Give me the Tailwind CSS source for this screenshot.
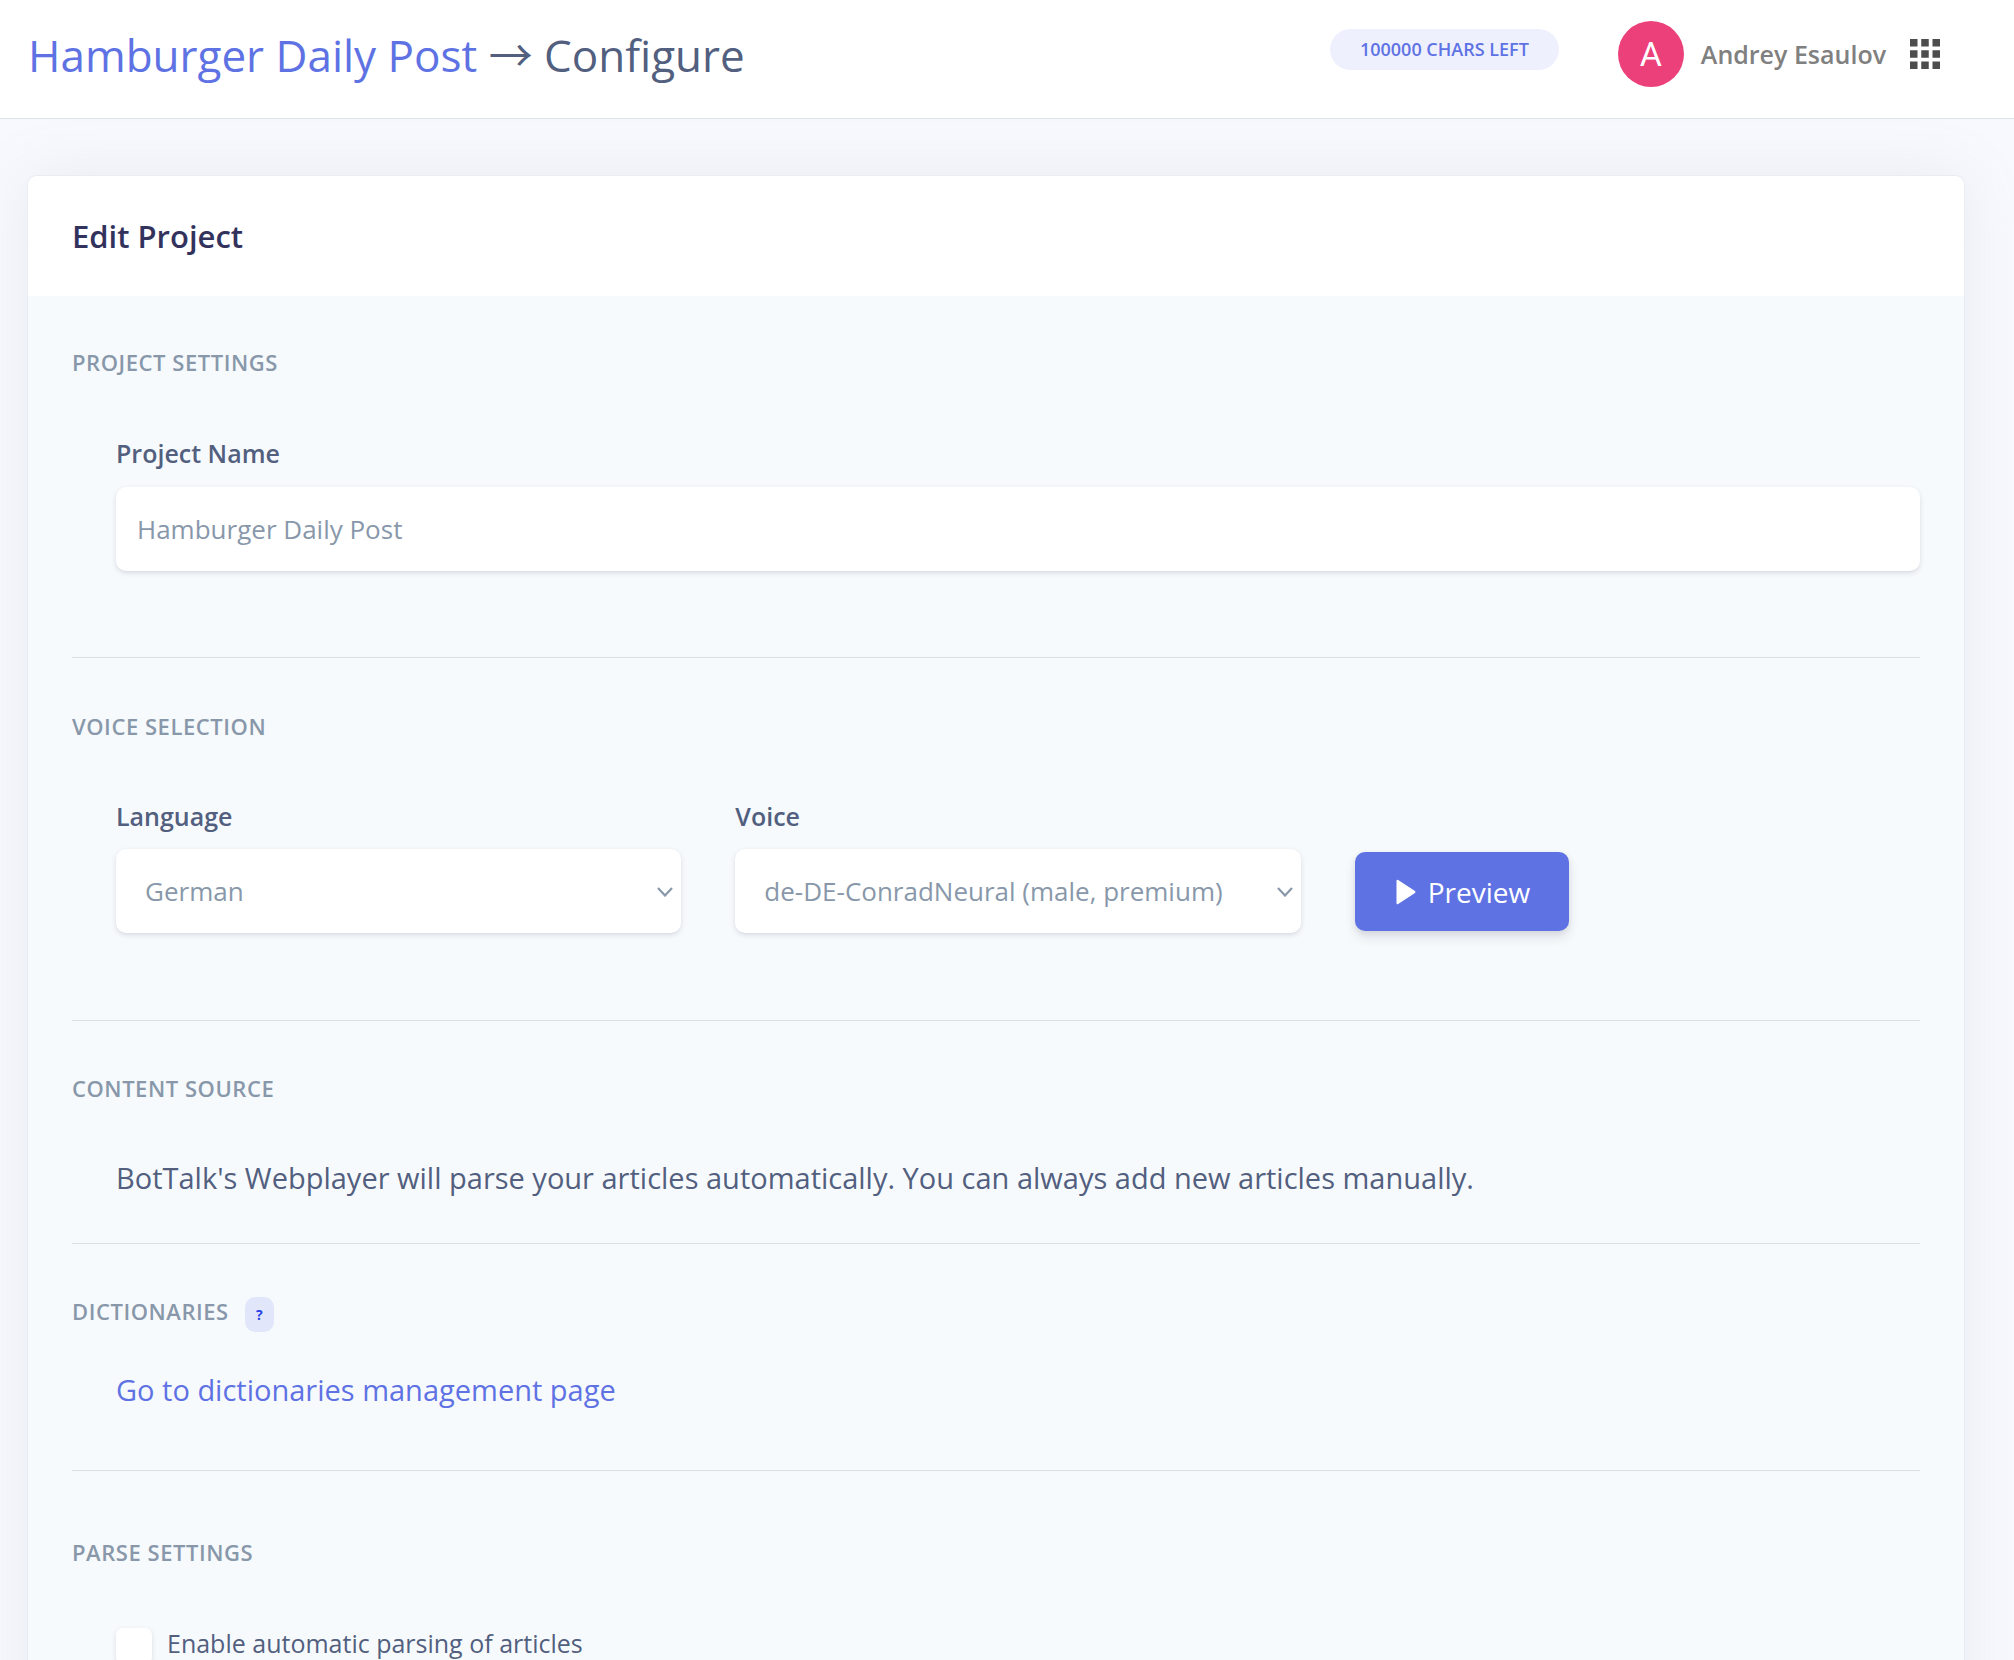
<!DOCTYPE html>
<html lang="en">
  <head>
    <meta charset="UTF-8" />
    <meta name="viewport" content="width=device-width, initial-scale=1.0" />
    <title>Hamburger Daily Post - Configure</title>
    <script src="https://cdn.jsdelivr.net/npm/@tailwindcss/browser@4"></script>
  </head>

  <body class="bg-[#f8f9fe] font-['Open_Sans',sans-serif] text-[#525f7f]">
    <div class="h-screen overflow-hidden">
      <!-- Top bar -->
      <header
        class="flex items-center bg-white border-b border-[#dfe2e6] pl-7 pr-[74px] pt-[21px] pb-[31px]"
      >
        <h1 class="text-[44px] leading-[56px] whitespace-nowrap">
          <a href="#" class="text-[#5e72e4]">Hamburger Daily Post</a>
          <span class="font-['Noto_Sans_CJK_SC',sans-serif]">→</span>
          Configure
        </h1>

        <span
          class="ml-auto mb-[10px] rounded-full bg-[#eef1fd] px-[30px] py-2 text-[18px] leading-[25px] font-semibold text-[#5e72e4] whitespace-nowrap"
          >100000 CHARS LEFT</span
        >

        <a href="#" class="ml-[59px] flex items-center gap-[17px]">
          <span
            class="flex size-[66px] items-center justify-center rounded-full bg-[#ec407a] font-[Roboto] text-[34px] text-white"
            >A</span
          >
          <span
            class="text-[25px] leading-10 font-semibold text-[#808080] whitespace-nowrap"
            >Andrey Esaulov</span
          >
        </a>

        <button type="button" aria-label="Apps" class="ml-6">
          <svg class="size-[30px]" viewBox="0 0 30 30" fill="#4d4d4d">
            <path
              d="M0 0h7.5v7.5H0zM11.25 0h7.5v7.5h-7.5zM22.5 0H30v7.5h-7.5zM0 11.25h7.5v7.5H0zM11.25 11.25h7.5v7.5h-7.5zM22.5 11.25H30v7.5h-7.5zM0 22.5h7.5V30H0zM11.25 22.5h7.5V30h-7.5zM22.5 22.5H30V30h-7.5z"
            />
          </svg>
        </button>
      </header>

      <!-- Project card -->
      <main
        class="mt-14 ml-[27px] mr-[49px] rounded-[10px] border border-black/5 bg-[#f7fafc] shadow-[0_0_60px_0_rgba(136,152,170,0.15)]"
      >
        <div class="rounded-t-[9px] bg-white px-11 py-9">
          <h2 class="text-[31px] leading-[48px] font-semibold text-[#32325d]">
            Edit Project
          </h2>
        </div>

        <form class="px-11 pt-[50px] pb-24">
          <!-- Project settings -->
          <section>
            <h3
              class="text-[22px] leading-8 font-semibold tracking-wide text-[#8898aa]"
            >
              PROJECT SETTINGS
            </h3>
            <div class="mt-[55px] pl-11">
              <label
                for="projectName"
                class="block text-[25px] leading-10 font-semibold"
                >Project Name</label
              >
              <input
                type="text"
                id="projectName"
                value="Hamburger Daily Post"
                class="mt-[14px] block h-[84px] w-full rounded-[10px] bg-white px-[21px] text-[26px] text-[#8898aa] shadow-[0_2px_5px_rgba(50,50,93,0.15),0_1px_0_rgba(0,0,0,0.02)] focus:outline-none"
              />
            </div>
          </section>

          <hr class="mt-[86px] mb-[52px] border-black/10" />

          <!-- Voice selection -->
          <section>
            <h3
              class="text-[22px] leading-8 font-semibold tracking-wide text-[#8898aa]"
            >
              VOICE SELECTION
            </h3>
            <div class="mt-[54px] grid grid-cols-3 items-end gap-[54px] pl-11">
              <div>
                <label
                  for="language"
                  class="block text-[25px] leading-10 font-semibold"
                  >Language</label
                >
                <div class="relative mt-[13px]">
                  <select
                    id="language"
                    class="block h-[84px] w-full appearance-none rounded-[10px] bg-white pl-[29px] pr-10 text-[26px] text-[#8898aa] shadow-[0_2px_5px_rgba(50,50,93,0.15),0_1px_0_rgba(0,0,0,0.02)] focus:outline-none"
                  >
                    <option>German</option>
                  </select>
                  <svg
                    class="pointer-events-none absolute top-[38px] right-2 h-[10px] w-4"
                    viewBox="0 0 16 10"
                    fill="none"
                    stroke="#8898aa"
                    stroke-width="2.2"
                  >
                    <path d="M1 1l7 7.500 7-7.500" />
                  </svg>
                </div>
              </div>

              <div>
                <label
                  for="voice"
                  class="block text-[25px] leading-10 font-semibold"
                  >Voice</label
                >
                <div class="relative mt-[13px]">
                  <select
                    id="voice"
                    class="block h-[84px] w-full appearance-none rounded-[10px] bg-white pl-[29px] pr-10 text-[26px] text-[#8898aa] shadow-[0_2px_5px_rgba(50,50,93,0.15),0_1px_0_rgba(0,0,0,0.02)] focus:outline-none"
                  >
                    <option>de-DE-ConradNeural (male, premium)</option>
                  </select>
                  <svg
                    class="pointer-events-none absolute top-[38px] right-2 h-[10px] w-4"
                    viewBox="0 0 16 10"
                    fill="none"
                    stroke="#8898aa"
                    stroke-width="2.2"
                  >
                    <path d="M1 1l7 7.500 7-7.500" />
                  </svg>
                </div>
              </div>

              <div class="pb-[2px]">
                <button
                  type="button"
                  class="flex h-[79px] items-center gap-3 rounded-[10px] bg-[#5e72e4] pr-[39px] pl-[41px] text-[28px] font-medium text-white shadow-[0_7px_11px_rgba(50,50,93,0.11),0_2px_6px_rgba(0,0,0,0.08)]"
                >
                  <svg class="h-[26px] w-5" viewBox="0 0 20 26" fill="#fff">
                    <path
                      d="M0.500 2Q0.500 0 2.200 1.100L19 12Q20 13 19 14L2.200 24.900Q0.500 26 0.500 24z"
                    />
                  </svg>
                  Preview
                </button>
              </div>
            </div>
          </section>

          <hr class="mt-[87px] mb-[51px] border-black/10" />

          <!-- Content source -->
          <section>
            <h3
              class="text-[22px] leading-8 font-semibold tracking-wide text-[#8898aa]"
            >
              CONTENT SOURCE
            </h3>
            <p class="mt-[49px] pl-11 text-[29px] leading-[50px]">
              BotTalk's Webplayer will parse your articles automatically. You
              can always add new articles manually.
            </p>
          </section>

          <hr class="mt-10 mb-[51px] border-black/10" />

          <!-- Dictionaries -->
          <section>
            <div class="flex h-8 items-center gap-4">
              <h3
                class="text-[22px] leading-8 font-semibold tracking-wide text-[#8898aa]"
              >
                DICTIONARIES
              </h3>
              <button
                type="button"
                aria-label="About dictionaries"
                class="mt-1.5 h-[35px] w-[29px] rounded-[10px] bg-[#e1e6fa] text-[14px] font-bold text-[#2643e9]"
              >
                ?
              </button>
            </div>
            <a
              href="#"
              class="mt-[38px] ml-11 block text-[29px] leading-[50px] text-[#5e72e4]"
              >Go to dictionaries management page</a
            >
          </section>

          <hr class="mt-[55px] mb-[65px] border-black/10" />

          <!-- Parse settings -->
          <section>
            <h3
              class="text-[22px] leading-8 font-semibold tracking-wide text-[#8898aa]"
            >
              PARSE SETTINGS
            </h3>
            <div class="mt-[55px] flex items-start gap-[15px] pl-11">
              <input
                type="checkbox"
                id="autoParse"
                class="mt-[5px] size-9 appearance-none rounded-[7px] bg-white shadow-[0_2px_5px_rgba(50,50,93,0.15)]"
              />
              <label for="autoParse" class="text-[25px] leading-10"
                >Enable automatic parsing of articles</label
              >
            </div>
          </section>
        </form>
      </main>
    </div>
  </body>
</html>
